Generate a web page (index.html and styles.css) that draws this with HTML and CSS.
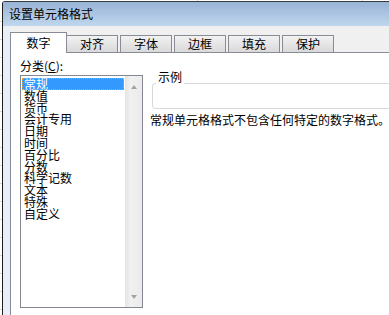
FILE: index.html
```html
<!DOCTYPE html>
<html lang="zh-CN">
<head>
<meta charset="utf-8">
<title>设置单元格格式</title>
<link rel="stylesheet" href="styles.css">
</head>
<body>
<div class="desk">
  <div class="window">
    <div class="titlebar">设置单元格格式</div>
    <div class="frame">
      <div class="client">
        <div class="tabs">
          <div class="tab active">数字</div>
          <div class="tab first">对齐</div>
          <div class="tab">字体</div>
          <div class="tab">边框</div>
          <div class="tab">填充</div>
          <div class="tab">保护</div>
        </div>
        <div class="panel">
          <div class="left">
            <div class="label">分类(<u>C</u>):</div>
            <div class="listbox">
              <ul class="items">
                <li class="sel">常规</li>
                <li>数值</li>
                <li>货币</li>
                <li>会计专用</li>
                <li>日期</li>
                <li>时间</li>
                <li>百分比</li>
                <li>分数</li>
                <li>科学记数</li>
                <li>文本</li>
                <li>特殊</li>
                <li>自定义</li>
              </ul>
              <div class="scrollbar">
                <span class="arrow up"></span>
                <span class="arrow down"></span>
              </div>
            </div>
          </div>
          <div class="right">
            <div class="sample">
              <span class="legend">示例</span>
            </div>
            <p class="desc">常规单元格格式不包含任何特定的数字格式。</p>
          </div>
        </div>
      </div>
    </div>
  </div>
</div>
</body>
</html>
```
FILE: styles.css
```css
html, body {
  margin: 0;
  padding: 0;
}
body {
  width: 389px;
  height: 315px;
  overflow: hidden;
  background: #fff;
  font-family: "Noto Sans CJK SC", "Noto Sans", sans-serif;
  font-size: 12px;
  color: #000;
}
.desk {
  height: 315px;
  box-sizing: border-box;
  padding: 1px 0 0 2px;
  background-color: #fff;
  background-image:
    repeating-linear-gradient(to bottom, transparent 0 17px, #d9d9d9 17px 18px),
    repeating-linear-gradient(to right, transparent 0 164px, #d9d9d9 164px 165px);
  background-position: 0 4px, 33px 0;
}
.window {
  width: 430px;
  height: 100%;
  display: flex;
  flex-direction: column;
  border-left: 1px solid #1e1e1e;
  border-top: 1px solid #3a3a3a;
  border-top-left-radius: 3px;
  overflow: hidden;
}
.titlebar {
  height: 24px;
  line-height: 24px;
  padding-left: 6px;
  background: linear-gradient(to bottom, #98b4d5, #c0d6ee);
  white-space: nowrap;
}
.frame {
  flex: 1;
  display: flex;
  flex-direction: column;
  padding-left: 7px;
  background: #e9eff6;
}
.client {
  flex: 1;
  display: flex;
  flex-direction: column;
  background: #f0f0f0;
}
.tabs {
  height: 27px;
  margin-bottom: -1px;
  display: flex;
  align-items: flex-end;
  position: relative;
  z-index: 1;
}
.tab {
  box-sizing: border-box;
  width: 52px;
  height: 17px;
  margin-left: 2px;
  margin-bottom: 1px;
  border: 1px solid #898c95;
  border-bottom: none;
  background: linear-gradient(to bottom, #f2f2f2, #d9d9d9);
  text-align: center;
  line-height: 16px;
}
.tab.first {
  margin-left: -1px;
}
.tab.active {
  width: 57px;
  height: 21px;
  margin-left: 0;
  margin-bottom: 0;
  background: #fff;
  line-height: 14px;
  padding-top: 3px;
}
.panel {
  flex: 1;
  display: flex;
  background: #fff;
  border-left: 1px solid #898c95;
  border-top: 1px solid #898c95;
  padding: 6px 0 0 9px;
}
.left {
  width: 123px;
  flex: none;
}
.label {
  line-height: 14px;
  height: 14px;
  margin-bottom: 2px;
}
.listbox {
  box-sizing: border-box;
  width: 123px;
  height: 233px;
  border: 1px solid #828790;
  display: flex;
}
.items {
  list-style: none;
  margin: 0;
  padding: 2px 0 0 0;
  flex: 1;
}
.items li {
  height: 11.8px;
  line-height: 12px;
  margin: 0 1px;
  padding-left: 2px;
  white-space: nowrap;
}
.items li.sel {
  background: #3399ff;
  color: #fff;
  outline: 1px dotted #f0a030;
  outline-offset: -1px;
}
.scrollbar {
  width: 17px;
  flex: none;
  display: flex;
  flex-direction: column;
  justify-content: space-between;
  align-items: center;
  padding: 9px 0 8px;
  box-sizing: border-box;
  background: linear-gradient(to right, #e4e4e4, #f1f1f1 35%, #ebebeb);
}
.arrow {
  width: 0;
  height: 0;
  border-left: 3.5px solid transparent;
  border-right: 3.5px solid transparent;
}
.arrow.up {
  border-bottom: 4px solid #a3a3a3;
}
.arrow.down {
  border-top: 4px solid #a3a3a3;
}
.right {
  margin-left: 7px;
  flex: 1;
}
.sample {
  position: relative;
  width: 260px;
  height: 24px;
  margin: 24px 0 0 2px;
  border: 1px solid #d5dadf;
  border-radius: 3px;
}
.legend {
  position: absolute;
  top: -14px;
  left: 3px;
  padding: 0 2px;
  line-height: 14px;
  background: #fff;
}
.desc {
  margin: 4px 0 0 0;
  line-height: 14px;
  white-space: nowrap;
}
```
